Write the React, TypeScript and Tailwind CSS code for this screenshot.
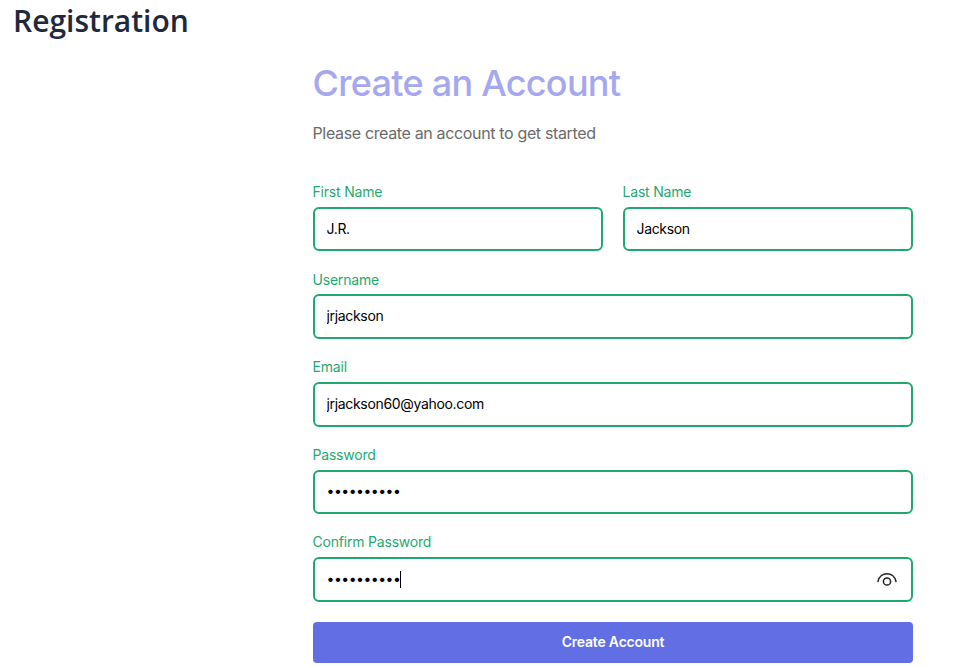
import React from "react";

function EyeIcon() {
  return (
    <svg width="20" height="16" viewBox="0 0 20 16" fill="none" stroke="#222" strokeWidth="1.5" strokeLinecap="round">
      <path d="M1 9.5C3.2 -1 16.8 -1 19 9.5" />
      <circle cx="10" cy="9.5" r="3.6" />
    </svg>
  );
}

function Field({
  label,
  value,
  type = "text",
  caret = false,
  eye = false,
}: {
  label: string;
  value: string;
  type?: string;
  caret?: boolean;
  eye?: boolean;
}) {
  const isPassword = type === "password";
  return (
    <div className="flex-1">
      <label className="block text-[14px] leading-[20px] tracking-[-0.2px] text-[#1fa971] mb-[4.8px] -ml-[0.5px]">
        {label}
      </label>
      <div className="relative">
        <input
          readOnly
          type={type}
          value={value}
          className={`block w-full h-[44.7px] pl-[11.5px] pr-[12px] pb-[2px] border-2 border-[#1fa971] rounded-[6px] text-[14px] text-black bg-white outline-none ${
            isPassword ? "tracking-[-0.5px]" : "tracking-[-0.33px]"
          }`}
        />
        {caret && <span className="absolute left-[87px] top-[14px] w-px h-[17px] bg-black" />}
        {eye && (
          <span className="absolute right-[16.5px] top-[15px]">
            <EyeIcon />
          </span>
        )}
      </div>
    </div>
  );
}

export default function App() {
  return (
    <div className="bg-white h-[668px] overflow-hidden font-['Inter',sans-serif]">
      <h1 className="pl-[13px] pt-[1px] text-[30px] leading-[40px] font-[550] text-[#1e293b] font-['Open_Sans',sans-serif]">
        Registration
      </h1>
      <div className="w-[600px] ml-[313px] mt-[18px]">
        <h2 className="text-[36px] leading-[48px] font-[450] tracking-[-0.72px] text-[#a5a8f0] -ml-[0.5px]">
          Create an Account
        </h2>
        <p className="mt-[14px] text-[16px] leading-[24px] tracking-[-0.35px] text-[#6b6b6b] -ml-[0.5px]">
          Please create an account to get started
        </p>
        <div className="mt-[37px] flex flex-col gap-[18.1px]">
          <div className="flex gap-[20px]">
            <Field label="First Name" value="J.R." />
            <Field label="Last Name" value="Jackson" />
          </div>
          <Field label="Username" value="jrjackson" />
          <Field label="Email" value="jrjackson60@yahoo.com" />
          <Field label="Password" type="password" value="jrjackson1" />
          <Field label="Confirm Password" type="password" value="jrjackson1" caret eye />
        </div>
        <button className="mt-[20.1px] w-full h-[41px] pb-[2px] rounded-[4px] bg-[#626ee3] text-white text-[14px] tracking-[-0.2px] font-semibold">
          Create Account
        </button>
      </div>
    </div>
  );
}
